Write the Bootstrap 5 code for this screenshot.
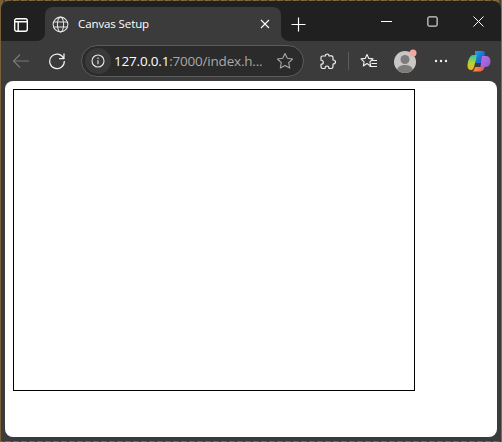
<!doctype html>
<html lang="en">
<head>
<meta charset="utf-8">
<title>Canvas Setup</title>
<link href="https://cdn.jsdelivr.net/npm/bootstrap@5.3.0/dist/css/bootstrap.min.css" rel="stylesheet">
<style>
html,body{height:442px;overflow:hidden}
body{background:repeating-linear-gradient(90deg,#7a6238 0 3px,#4a4030 3px 5px,#8a6a3a 5px 8px);padding:1px 0 1px 1px;font-family:"Open Sans",sans-serif}
.win{width:500px;height:440px;background:#3b3b3b;border-radius:8px 8px 0 0;overflow:hidden}
.titlebar{height:40px;background:#202020;padding-top:6px}
.sidebtn{width:44px;height:34px;padding-right:4px;padding-top:1px}
.tabx{width:236px;height:34px;background:#3b3b3b;border-radius:8px 8px 0 0;color:#fff;padding:0 11px 0 7px;gap:9px;position:relative}
.tabx::before,.tabx::after{content:"";position:absolute;bottom:0;width:8px;height:8px}
.tabx::before{left:-8px;background:radial-gradient(circle at 0 0,#202020 7.500px,#3b3b3b 8.500px)}
.tabx::after{right:-8px;background:radial-gradient(circle at 100% 0,#202020 7.500px,#3b3b3b 8.500px)}
.tname{flex:1;font-size:11.500px;letter-spacing:-.1px}
.newtab{width:35px;height:34px}
.capbtn{width:46px;height:34px;margin-top:-3px}
.toolbar{height:40px;padding-left:3px}
.tool{width:34px;height:40px;flex:none}
.t-reload{margin-left:2px}
.t-fav{margin-left:3px}
.t-prof{margin-left:5px;width:30px}
.t-dots{margin-left:3px}
.t-copilot{margin-left:4px}
.rightgrp{padding-left:7px}
.addr{width:223px;height:32px;margin-left:7px;border:1px solid #5c5c5c;border-radius:16px;background:#2b2b2b;padding:0 9px 0 3px}
.infobox{width:26px;height:26px;background:#3a3a3a;border-radius:50%;flex:none}
.urlx{flex:1;font-size:13.500px;letter-spacing:-.2px;white-space:nowrap;overflow:hidden;padding-left:3px;color:#a8a8a8}
.urlx b{font-weight:400;color:#fff}
.vsep{width:1px;height:18px;background:#5c5c5c;flex:none;margin-left:3px}
.pagex{width:492px;height:356px;margin-left:4px;background:#fff;border-radius:8px;padding:8px}
.cnv{width:402px;height:302px;border:1px solid #000}
svg{display:block;flex:none}
</style>
</head>
<body>
<div class="win">
  <div class="titlebar d-flex align-items-start">
    <div class="sidebtn d-flex align-items-center justify-content-center">
      <svg width="16" height="16" viewBox="0 0 16 16" fill="none" stroke="#fff" stroke-width="1.400"><rect x="1.700" y="1.700" width="12.600" height="12.600" rx="2"/><path d="M1.700 4.800h12.600M5.200 4.800v9.500"/></svg>
    </div>
    <div class="tabx d-flex align-items-center">
      <svg width="17" height="17" viewBox="0 0 18 18" fill="none" stroke="#e4e4e4" stroke-width="1.100"><circle cx="9" cy="9" r="7.800"/><ellipse cx="9" cy="9" rx="3.300" ry="7.800"/><path d="M2 6.300h14M2 11.700h14"/></svg>
      <span class="tname">Canvas Setup</span>
      <svg width="10" height="10" viewBox="0 0 10 10" stroke="#fff" stroke-width="1.100"><path d="M1 1l8 8M9 1l-8 8"/></svg>
    </div>
    <div class="newtab d-flex align-items-center justify-content-center">
      <svg width="15" height="15" viewBox="0 0 15 15" stroke="#fff" stroke-width="1.200"><path d="M7.500 .5v14M.5 7.500h14"/></svg>
    </div>
    <div class="flex-grow-1"></div>
    <div class="capbtn d-flex align-items-center justify-content-center">
      <svg width="11" height="11" viewBox="0 0 11 11" stroke="#fff" stroke-width="1"><path d="M0 5.500h11"/></svg>
    </div>
    <div class="capbtn d-flex align-items-center justify-content-center">
      <svg width="11" height="11" viewBox="0 0 11 11" fill="none" stroke="#fff" stroke-width="1"><rect x=".9" y=".9" width="9.200" height="9.200" rx="1"/></svg>
    </div>
    <div class="capbtn d-flex align-items-center justify-content-center">
      <svg width="11" height="11" viewBox="0 0 11 11" stroke="#fff" stroke-width="1"><path d="M.5.5l10 10M10.500.5l-10 10"/></svg>
    </div>
  </div>
  <div class="toolbar d-flex align-items-center">
    <div class="tool d-flex align-items-center justify-content-center">
      <svg width="18" height="16" viewBox="0 0 18 16" fill="none" stroke="#787878" stroke-width="1.200"><path d="M17 8H1.500M8 1.500L1.500 8 8 14.500"/></svg>
    </div>
    <div class="tool t-reload d-flex align-items-center justify-content-center">
      <svg width="18" height="18" viewBox="0 0 18 18" fill="none" stroke="#f0f0f0" stroke-width="1.250"><path d="M15.600 6.200A7.300 7.300 0 1 0 16.300 9M16 1.600v4.900h-4.900"/></svg>
    </div>
    <div class="addr d-flex align-items-center">
      <div class="infobox d-flex align-items-center justify-content-center">
        <svg width="14" height="14" viewBox="0 0 14 14" fill="none" stroke="#e8e8e8" stroke-width="1.100"><circle cx="7" cy="7" r="6"/><path d="M7 6.200v4M7 3.600v1.300"/></svg>
      </div>
      <div class="urlx"><b>127.0.0.1</b>:7000/index.h...</div>
      <svg width="18" height="18" viewBox="0 0 18 18" fill="none" stroke="#a8a8a8" stroke-width="1.100" stroke-linejoin="round"><path d="M9 1.400l2.300 4.900 5.300.7-3.900 3.700 1 5.300L9 13.400l-4.700 2.600 1-5.300L1.400 7l5.300-.7z"/></svg>
    </div>
    <div class="rightgrp d-flex align-items-center flex-grow-1">
      <div class="tool d-flex align-items-center justify-content-center">
        <svg width="16" height="17" viewBox="0 0 16 17" fill="none" stroke="#f0f0f0" stroke-width="1.150" stroke-linejoin="round"><path d="M6 1.500c1.400-1 3-.2 3 1.400h2.500a1.500 1.500 0 0 1 1.500 1.500V7c1.800 0 2.500 1 2.500 2s-.7 2-2.500 2v2.800a1.700 1.700 0 0 1-1.700 1.700H9c0-2-1-2.500-2-2.500s-2 .5-2 2.500H2.700A1.700 1.700 0 0 1 1 13.800v-2.600c1.500 0 2.300-.9 2.300-2S2.500 7.200 1 7.200V4.500A1.500 1.500 0 0 1 2.500 3h2.900c0-.6.100-1 .6-1.500z"/></svg>
      </div>
      <div class="vsep"></div>
      <div class="tool t-fav d-flex align-items-center justify-content-center">
        <svg width="18" height="17" viewBox="0 0 18 17" fill="none" stroke="#f0f0f0" stroke-width="1.100" stroke-linejoin="round"><path d="M7 1.500l1.800 3.900 4.200.5-3.100 2.900.8 4.200L7 10.500l-3.700 2.500.8-4.200L1 5.900l4.200-.5zM12 7.500h5M11.500 10.500h5.500M9.500 13.500h7.500"/></svg>
      </div>
      <div class="tool t-prof d-flex align-items-center justify-content-center">
        <svg width="26" height="26" viewBox="0 0 26 26"><circle cx="12" cy="14" r="11" fill="#c9c7c5"/><circle cx="12" cy="11.500" r="4.500" fill="#7e7c7a"/><path d="M4 21.500c1.500-3.500 4.500-4.500 8-4.500s6.500 1 8 4.500a11 11 0 0 1-16 0z" fill="#7e7c7a"/><circle cx="20" cy="5" r="3.500" fill="#f4a5a0"/></svg>
      </div>
      <div class="tool t-dots d-flex align-items-center justify-content-center">
        <svg width="14" height="4" viewBox="0 0 14 4" fill="#f0f0f0"><circle cx="2" cy="2" r="1.200"/><circle cx="7" cy="2" r="1.200"/><circle cx="12" cy="2" r="1.200"/></svg>
      </div>
      <div class="tool t-copilot d-flex align-items-center justify-content-center">
        <svg width="24" height="22" viewBox="0 0 24 22">
          <defs>
            <linearGradient id="g1" x1="0" y1="0" x2="1" y2="1"><stop offset="0" stop-color="#1fa8e8"/><stop offset=".55" stop-color="#1a6fd0"/><stop offset="1" stop-color="#3a4fc0"/></linearGradient>
            <linearGradient id="g2" x1="0" y1="0" x2="0" y2="1"><stop offset="0" stop-color="#3bc4a0"/><stop offset=".55" stop-color="#b6d430"/><stop offset="1" stop-color="#f5b020"/></linearGradient>
            <linearGradient id="g3" x1="0" y1="0" x2="1" y2="1"><stop offset="0" stop-color="#c070e0"/><stop offset="1" stop-color="#8a5ad8"/></linearGradient>
            <linearGradient id="g4" x1="0" y1="0" x2="1" y2="0"><stop offset="0" stop-color="#f6a030"/><stop offset="1" stop-color="#ee4a5a"/></linearGradient>
          </defs>
          <path d="M8 1h7c2 0 3 1 3 3l-3 9H8z" fill="url(#g1)"/>
          <path d="M6 5h4L7 17c-.4 1.500-1 3-3 3-2.500 0-3.500-2-3.500-4 0-5 2.500-11 5.500-11z" fill="url(#g2)"/>
          <path d="M15 6h4c2.500 0 4.500 2 4.500 5 0 3-1.500 6-5 6h-5z" fill="url(#g3)"/>
          <path d="M8 17h8l2-1c-.8 3-2.500 5.500-5 5.500H5c2 0 2.500-2.500 3-4.500z" fill="url(#g4)"/>
        </svg>
      </div>
    </div>
  </div>
  <div class="pagex">
    <div class="cnv"></div>
  </div>
</div>
</body>
</html>
